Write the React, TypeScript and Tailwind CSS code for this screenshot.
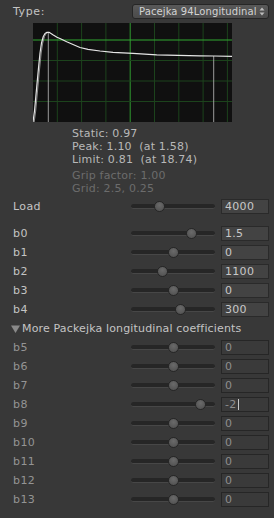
import React from "react";

type Row = { label: string; value: string; pos: number; dim?: boolean; caret?: boolean };

const TRACK_L = 5.5;
const TRACK_W = 84 - 11;

function Slider({ pos }: { pos: number }) {
  const left = TRACK_L + pos * TRACK_W - 5.5;
  return (
    <div className="relative w-[84px] h-[19px] flex items-center">
      <div className="w-full h-[5px] rounded-full bg-[#262626] border-b border-[#474747]" />
      <div
        className="absolute top-[4px] w-[11px] h-[11px] rounded-full border border-[#262626] bg-[radial-gradient(circle_at_50%_35%,#6a6a6a,#4d4d4d)]"
        style={{ left }}
      />
    </div>
  );
}

function Field({ value, dim, caret }: { value: string; dim?: boolean; caret?: boolean }) {
  return (
    <div
      className={
        "ml-[6px] w-[48px] h-[15px] flex items-center pl-[3px] border text-[11px] leading-none tracking-[0.3px] " +
        (dim
          ? "bg-[#3a3a3a] border-[#262626] text-[#8e8e8e]"
          : "bg-[#434343] border-[#2a2a2a] text-[#c8c8c8]")
      }
    >
      <span>{value}</span>
      {caret && <span className="ml-[1px] w-[1px] h-[11px] bg-[#c8c8c8]" />}
    </div>
  );
}

function SliderRow({ r }: { r: Row }) {
  return (
    <div className="h-[19px] flex items-center">
      <div
        className={
          "w-[131px] pl-[13px] text-[11px] leading-none tracking-[0.4px] " +
          (r.dim ? "text-[#949494]" : "text-[#c4c4c4]")
        }
      >
        {r.label}
      </div>
      <Slider pos={r.pos} />
      <Field value={r.value} dim={r.dim} caret={r.caret} />
    </div>
  );
}

function Chart() {
  const vx = [24.3, 48.6, 72.9, 97.2, 121.5, 145.8, 170.1, 194.4];
  const hy = [78.5, 58, 37.5, 17];
  const pts: [number, number][] = [
    [0, 99], [1.5, 88], [3.7, 64], [5.5, 45], [7, 30], [8.5, 20], [10.3, 13.5], [12, 10.5],
    [14, 9.3], [16, 9.3], [18, 10.5], [20.3, 12], [24, 14.2], [28, 16], [33.7, 18.7],
    [40, 21.5], [47, 24.5], [55, 26.3], [67, 28], [80, 29.3], [100, 30.3], [123.7, 31.8],
    [145, 32.3], [167, 32.8], [181, 33], [199, 33.3],
  ];
  const d = pts.map((p, i) => (i === 0 ? "M" : "L") + p[0] + " " + p[1]).join(" ");
  const d2 = pts
    .slice(0, 9)
    .map((p, i) => (i === 0 ? "M" : "L") + (p[0] + 1.2) + " " + p[1])
    .join(" ");
  return (
    <svg width="199" height="99" viewBox="0 0 199 99" className="block">
      <rect width="199" height="99" fill="#101010" />
      {vx.map((x, i) => (
        <line key={"v" + i} x1={x} y1={0} x2={x} y2={99} stroke={i === 3 ? "#2f9a2f" : "#1c431c"} strokeWidth={1} />
      ))}
      {hy.map((y, i) => (
        <line key={"h" + i} x1={0} y1={y} x2={199} y2={y} stroke={i === 3 ? "#31a831" : "#1c431c"} strokeWidth={1} />
      ))}
      <line x1={15.3} y1={9.5} x2={15.3} y2={99} stroke="#9a9a9a" strokeWidth={1} />
      <line x1={180.7} y1={33} x2={180.7} y2={99} stroke="#9a9a9a" strokeWidth={1} />
      <path d={d2} fill="none" stroke="#8c8c8c" strokeWidth={1} strokeLinejoin="round" />
      <path d={d} fill="none" stroke="#e6e6e6" strokeWidth={1.2} strokeLinejoin="round" />
    </svg>
  );
}

export default function App() {
  const main: Row[] = [
    { label: "b0", value: "1.5", pos: 0.75 },
    { label: "b1", value: "0", pos: 0.5 },
    { label: "b2", value: "1100", pos: 0.36 },
    { label: "b3", value: "0", pos: 0.5 },
    { label: "b4", value: "300", pos: 0.6 },
  ];
  const more: Row[] = [
    { label: "b5", value: "0", pos: 0.5, dim: true },
    { label: "b6", value: "0", pos: 0.5, dim: true },
    { label: "b7", value: "0", pos: 0.5, dim: true },
    { label: "b8", value: "-2", pos: 0.87, dim: true, caret: true },
    { label: "b9", value: "0", pos: 0.5, dim: true },
    { label: "b10", value: "0", pos: 0.5, dim: true },
    { label: "b11", value: "0", pos: 0.5, dim: true },
    { label: "b12", value: "0", pos: 0.5, dim: true },
    { label: "b13", value: "0", pos: 0.5, dim: true },
  ];
  return (
    <div className="w-[274px] h-[518px] bg-[#383838] overflow-hidden font-['DejaVu_Sans',sans-serif] text-[11px]">
      <div className="pt-[4px] h-[19px] flex items-center">
        <div className="w-[132px] pl-[13px] text-[#c4c4c4] leading-none tracking-[0.6px]">Type:</div>
        <div className="w-[137px] h-[15px] rounded-[3px] border border-[#262626] bg-[linear-gradient(#595959,#4b4b4b)] flex items-center pl-[6px] pr-[3px] text-[10px] text-[#d2d2d2] leading-none">
          <span className="whitespace-nowrap tracking-[0.1px]">Pacejka 94Longitudinal</span>
          <svg width="6" height="9" viewBox="0 0 6 9" className="ml-auto shrink-0">
            <path d="M3 0.5 L5.5 3.5 H0.5 Z" fill="#bdbdbd" />
            <path d="M3 8.5 L5.5 5.5 H0.5 Z" fill="#bdbdbd" />
          </svg>
        </div>
      </div>
      <div className="mt-[4px] ml-[33px]">
        <Chart />
      </div>
      <div className="mt-[5px] pl-[72px] leading-[13px] whitespace-pre tracking-[0.2px]">
        <div className="text-[#b8b8b8]">Static: 0.97</div>
        <div className="text-[#b8b8b8]">Peak: 1.10  (at 1.58)</div>
        <div className="text-[#b8b8b8]">Limit: 0.81  (at 18.74)</div>
        <div className="mt-[3px] text-[#6c6c6c]">Grip factor: 1.00</div>
        <div className="text-[#6c6c6c]">Grid: 2.5, 0.25</div>
      </div>
      <div className="mt-[2px]">
        <SliderRow r={{ label: "Load", value: "4000", pos: 0.31 }} />
      </div>
      <div className="mt-[8px]">
        {main.map((r) => (
          <SliderRow key={r.label} r={r} />
        ))}
      </div>
      <div className="h-[19px] flex items-center pl-[11px] text-[#c4c4c4] leading-none tracking-[0.15px]">
        <svg width="9" height="8" viewBox="0 0 9 8" className="mr-[2px]">
          <path d="M0 0.5 H9 L4.5 8 Z" fill="#8a8a8a" />
        </svg>
        <span>More Packejka longitudinal coefficients</span>
      </div>
      {more.map((r) => (
        <SliderRow key={r.label} r={r} />
      ))}
    </div>
  );
}
